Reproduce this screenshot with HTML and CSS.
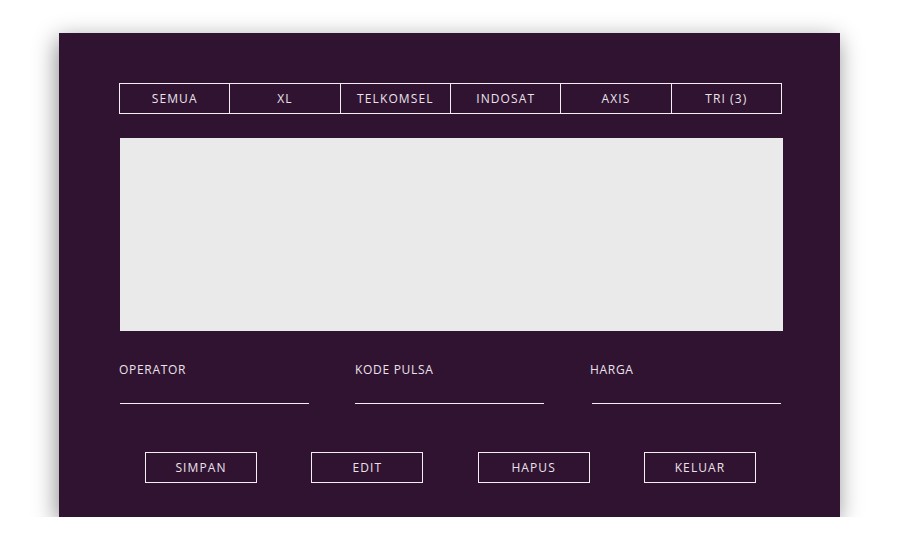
FILE: index.html
```html
<!DOCTYPE html>
<html>
<head>
<meta charset="utf-8">
<link rel="stylesheet" href="styles.css">
</head>
<body>
<div class="panel">
  <div class="tabs">
    <div class="tab">SEMUA</div>
    <div class="tab">XL</div>
    <div class="tab">TELKOMSEL</div>
    <div class="tab">INDOSAT</div>
    <div class="tab">AXIS</div>
    <div class="tab">TRI (3)</div>
  </div>
  <div class="table"></div>
  <div class="fields">
    <div class="field field-a"><div class="label">OPERATOR</div><div class="line"></div></div>
    <div class="field field-b"><div class="label">KODE PULSA</div><div class="line"></div></div>
    <div class="field field-c"><div class="label">HARGA</div><div class="line"></div></div>
  </div>
  <div class="buttons">
    <div class="btn">SIMPAN</div>
    <div class="btn">EDIT</div>
    <div class="btn">HAPUS</div>
    <div class="btn">KELUAR</div>
  </div>
</div>
</body>
</html>
```
FILE: styles.css
```css
html, body {
  margin: 0;
  padding: 0;
  background: #ffffff;
}
body {
  padding-top: 33px;
  font-family: "Open Sans", "Noto Sans", sans-serif;
}
.panel {
  width: 781px;
  height: 484px;
  margin: 0 0 0 59px;
  box-sizing: border-box;
  background: #2f1331;
  padding: 50px 58px 0 60px;
  box-shadow: -2px 6px 22px rgba(0, 0, 0, 0.45);
  color: #ece2ea;
}
.tabs {
  display: flex;
  border: 1px solid #f2eef2;
  height: 29px;
}
.tab {
  flex: 1;
  display: flex;
  align-items: center;
  justify-content: center;
  font-size: 12px;
  letter-spacing: 1.1px;
  border-left: 1px solid #f2eef2;
}
.tab:first-child {
  border-left: none;
}
.table {
  margin: 24px -1px 0 1px;
  height: 193px;
  background: #eaeaea;
}
.fields {
  display: grid;
  grid-template-columns: 190px 189px 191px;
  column-gap: 46px;
  margin-top: 32px;
}
.label {
  font-size: 12px;
  letter-spacing: 0.7px;
  line-height: 14px;
  height: 14px;
}
.line {
  height: 26px;
  border-bottom: 1px solid #f2eef2;
}
.field-a .line {
  margin-left: 1px;
}
.field-c .line {
  margin-left: 2px;
}
.buttons {
  display: flex;
  justify-content: space-between;
  padding: 0 26px;
  margin-top: 48px;
}
.btn {
  width: 110px;
  height: 29px;
  border: 1px solid #f2eef2;
  display: flex;
  align-items: center;
  justify-content: center;
  font-size: 12px;
  letter-spacing: 1.1px;
}
```
